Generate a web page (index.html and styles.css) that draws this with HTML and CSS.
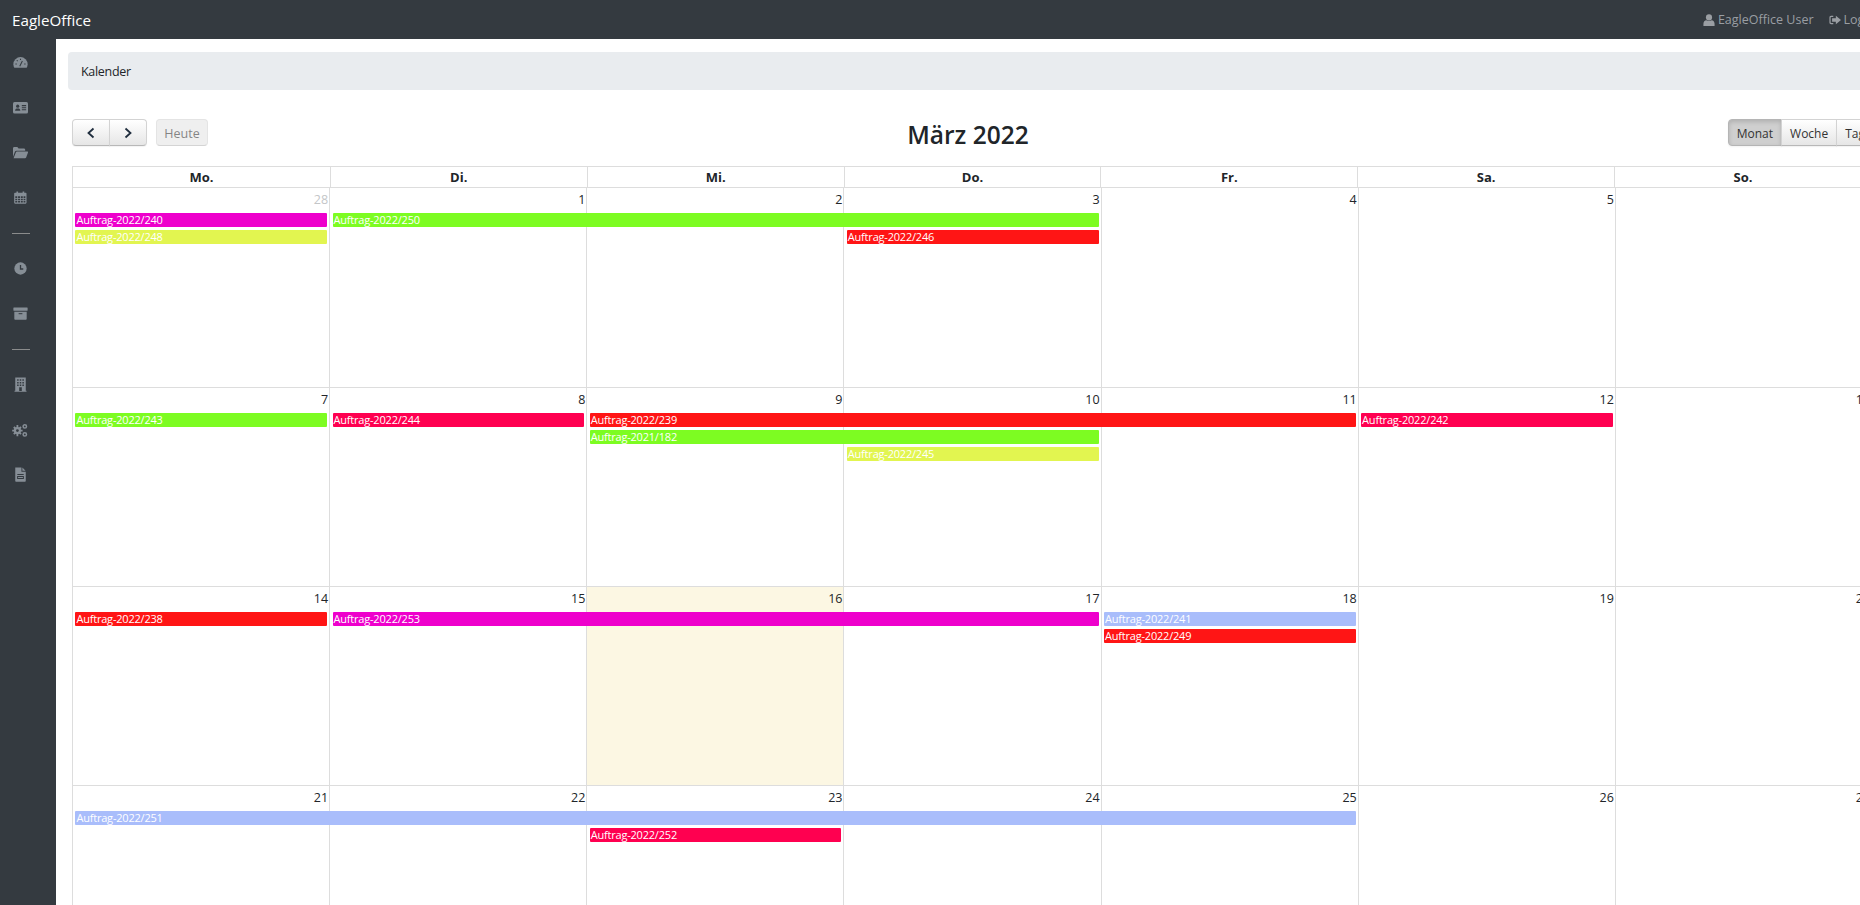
FILE: index.html
```html
<!DOCTYPE html>
<html lang="de">
<head>
<meta charset="utf-8">
<title>EagleOffice – Kalender</title>
<link rel="stylesheet" href="styles.css">
</head>
<body>
<header class="topbar">
  <a class="brand">EagleOffice</a>
  <nav class="usernav">
    <a class="usernav-link"><svg class="uicon" viewBox="0 0 14 14"><circle cx="7" cy="4" r="3.6"/><path d="M0.5 14V11.5C0.5 9 2 7.5 4 7.3C5.8 8.6 8.2 8.6 10 7.3C12 7.5 13.5 9 13.5 11.5V14Z"/></svg>EagleOffice User</a>
    <a class="usernav-link"><svg class="uicon" viewBox="0 0 14 12"><path d="M5 1H2.5C1.2 1 .5 2 .5 3V9C.5 10 1.2 11 2.5 11H5V9.6H2.6C2.1 9.6 1.9 9.3 1.9 9V3C1.9 2.7 2.1 2.4 2.6 2.4H5Z"/><path d="M8 1L14 6L8 11V8H3.6V4H8Z"/></svg>Logout</a>
  </nav>
</header>
<div class="shell">
  <aside class="sidebar">
    <a class="side-item"><svg class="sicon" viewBox="0 0 16 16"><path d="M8 2.2A7.6 7.6 0 0 0 .4 9.8C.4 11.2.8 12.5 1.4 13.6H14.6C15.2 12.5 15.6 11.2 15.6 9.8A7.6 7.6 0 0 0 8 2.2Z"/><path class="cut" d="M8 4v1.4M4 5.6l1 1M2.6 9.6h1.4M12 9.6h1.4M7.2 12L10 6.4" /></svg></a>
    <a class="side-item"><svg class="sicon" viewBox="0 0 16 16"><rect y="2" width="16" height="12.4" rx="1.6"/><circle class="hole" cx="5" cy="6.6" r="1.7"/><path class="hole" d="M2.2 11.4C2.2 9.6 3.2 9 5 9S7.8 9.6 7.8 11.4Z"/><path class="cut" d="M9.4 6h4.6M9.4 8.2h4.6M9.4 10.4h4.6"/></svg></a>
    <a class="side-item"><svg class="sicon" viewBox="0 0 16 16"><path d="M0 12.6V3.4C0 2.6.6 2 1.4 2H4.6L6 3.6H11.6C12.4 3.6 13 4.2 13 5V6H4C3 6 2.4 6.4 2 7.2Z"/><path d="M.6 14L3 7.9C3.2 7.3 3.6 7 4.2 7H15.2C15.9 7 16.2 7.5 16 8.1L14 13.2C13.8 13.7 13.4 14 12.8 14Z"/></svg></a>
    <a class="side-item"><svg class="sicon sicon-sm" viewBox="0 0 16 16"><path fill-rule="evenodd" d="M3 .6H5V2.2H10.6V.6H12.6V2.2H14.4C15 2.2 15.4 2.6 15.4 3.2V14.6C15.4 15.2 15 15.6 14.4 15.6H1.2C.6 15.6.2 15.2.2 14.6V3.2C.2 2.6.6 2.2 1.2 2.2H3ZM1.6 6.4V8.6H4V6.4ZM5 6.4V8.6H7.4V6.4ZM8.4 6.4V8.6H10.8V6.4ZM11.8 6.4V8.6H14V6.4ZM1.6 9.6V11.4H4V9.6ZM5 9.6V11.4H7.4V9.6ZM8.4 9.6V11.4H10.8V9.6ZM11.8 9.6V11.4H14V9.6ZM1.6 12.4V14.2H4V12.4ZM5 12.4V14.2H7.4V12.4ZM8.4 12.4V14.2H10.8V12.4ZM11.8 12.4V14.2H14V12.4Z"/></svg></a>
    <div class="side-rule-wrap"><hr class="side-rule"></div>
    <a class="side-item"><svg class="sicon sicon-sm" viewBox="0 0 16 16"><circle cx="8" cy="8" r="7.6"/><path class="cut wide-cut" d="M8 3.6V8.6H11.4"/></svg></a>
    <a class="side-item"><svg class="sicon" viewBox="0 0 16 16"><rect x=".4" y="1.6" width="15.2" height="3.4" rx=".4"/><path d="M1.4 6H14.6V13.8C14.6 14.2 14.2 14.6 13.8 14.6H2.2C1.8 14.6 1.4 14.2 1.4 13.8Z"/><path class="cut" d="M6 8.2H10"/></svg></a>
    <div class="side-rule-wrap"><hr class="side-rule"></div>
    <a class="side-item"><svg class="sicon" viewBox="0 0 16 16"><path fill-rule="evenodd" d="M2.4.4H13.6V14.6H14.4V15.6H1.6V14.6H2.4ZM4.4 2.4V4H6V2.4ZM7.2 2.4V4H8.8V2.4ZM10 2.4V4H11.6V2.4ZM4.4 5.2V6.8H6V5.2ZM7.2 5.2V6.8H8.8V5.2ZM10 5.2V6.8H11.6V5.2ZM4.4 8V9.6H6V8ZM7.2 8V9.6H8.8V8ZM10 8V9.6H11.6V8ZM6.6 11V15H9.4V11Z"/></svg></a>
    <a class="side-item"><svg class="sicon sicon-lg" viewBox="0 0 16 16"><circle cx="5.4" cy="8.6" r="3.6"/><path class="gear" d="M5.4 3v11.2M.2 8.6h10.4M1.8 5l7.2 7.2M9 5l-7.2 7.2"/><circle class="hole" cx="5.4" cy="8.6" r="1.4"/><circle class="ring" cx="12.8" cy="4.4" r="1.7"/><circle class="ring" cx="12.8" cy="12.4" r="1.7"/></svg></a>
    <a class="side-item"><svg class="sicon" viewBox="0 0 16 16"><path fill-rule="evenodd" d="M2.4.4H9V5H13.6V14.8C13.6 15.3 13.3 15.6 12.8 15.6H3.2C2.7 15.6 2.4 15.3 2.4 14.8ZM10 .6L13.4 4H10ZM4.6 7.4V8.4H11.4V7.4ZM4.4 9.6V12.8H11.6V9.6ZM5.4 10.6H10.6V11.8H5.4Z"/></svg></a>
  </aside>
  <main class="content">
    <div class="breadcrumb">Kalender</div>
    <section class="calendar">
      <div class="toolbar">
        <div class="tool-left">
          <div class="btn-group">
            <button class="btn btn-icon"><svg class="chev" viewBox="0 0 10 12"><path d="M7.5 1.5L2.5 6L7.5 10.5"/></svg></button>
            <button class="btn btn-icon"><svg class="chev" viewBox="0 0 10 12"><path d="M2.5 1.5L7.5 6L2.5 10.5"/></svg></button>
          </div>
          <button class="btn btn-disabled">Heute</button>
        </div>
        <h2 class="cal-title">März 2022</h2>
        <div class="btn-group tool-right">
          <button class="btn btn-active">Monat</button>
          <button class="btn">Woche</button>
          <button class="btn">Tag</button>
        </div>
      </div>
      <div class="grid">
        <div class="dow-row">
          <div class="dow">Mo.</div><div class="dow">Di.</div><div class="dow">Mi.</div><div class="dow">Do.</div><div class="dow">Fr.</div><div class="dow">Sa.</div><div class="dow">So.</div>
        </div>

        <div class="week week-first">
          <div class="day c1 other">28</div><div class="day c2">1</div><div class="day c3">2</div><div class="day c4">3</div><div class="day c5">4</div><div class="day c6">5</div><div class="day c7">6</div>
          <div class="ev magenta c1 r1">Auftrag-2022/240</div>
          <div class="ev green c2 r1 s3">Auftrag-2022/250</div>
          <div class="ev yellow c1 r2">Auftrag-2022/248</div>
          <div class="ev red c4 r2">Auftrag-2022/246</div>
        </div>

        <div class="week">
          <div class="day c1">7</div><div class="day c2">8</div><div class="day c3">9</div><div class="day c4">10</div><div class="day c5">11</div><div class="day c6">12</div><div class="day c7">13</div>
          <div class="ev green c1 r1">Auftrag-2022/243</div>
          <div class="ev pink c2 r1">Auftrag-2022/244</div>
          <div class="ev red c3 r1 s3">Auftrag-2022/239</div>
          <div class="ev pink c6 r1">Auftrag-2022/242</div>
          <div class="ev green c3 r2 s2">Auftrag-2021/182</div>
          <div class="ev yellow c4 r3">Auftrag-2022/245</div>
        </div>

        <div class="week">
          <div class="day c1">14</div><div class="day c2">15</div><div class="day c3 today">16</div><div class="day c4">17</div><div class="day c5">18</div><div class="day c6">19</div><div class="day c7">20</div>
          <div class="ev red c1 r1">Auftrag-2022/238</div>
          <div class="ev magenta c2 r1 s3">Auftrag-2022/253</div>
          <div class="ev blue c5 r1">Auftrag-2022/241</div>
          <div class="ev red c5 r2">Auftrag-2022/249</div>
        </div>

        <div class="week">
          <div class="day c1">21</div><div class="day c2">22</div><div class="day c3">23</div><div class="day c4">24</div><div class="day c5">25</div><div class="day c6">26</div><div class="day c7">27</div>
          <div class="ev blue c1 r1 s5">Auftrag-2022/251</div>
          <div class="ev pink c3 r2">Auftrag-2022/252</div>
        </div>
      </div>
    </section>
  </main>
</div>
</body>
</html>
```
FILE: styles.css
```css
* { box-sizing: border-box; }
html, body { margin: 0; height: 100%; overflow: hidden; }
body {
  font-family: "Open Sans", "Noto Sans", sans-serif;
  font-size: 14px;
  color: #212529;
  background: #fff;
}

/* top bar */
.topbar {
  height: 39px;
  background: #343a40;
  display: flex;
  align-items: center;
  justify-content: space-between;
  padding-left: 12px;
  overflow: hidden;
  white-space: nowrap;
}
.brand { color: #fff; font-size: 15.2px; }
.usernav { display: flex; gap: 15px; margin-right: -24px; align-items: center; }
.usernav-link { color: #9a9ea3; font-size: 12.5px; display: flex; align-items: center; gap: 3px; }
.uicon { width: 12px; height: 12px; fill: #9a9ea3; }

/* shell */
.shell { display: flex; height: 866px; }
.sidebar {
  flex: 0 0 56px;
  background: #343a40;
  display: flex;
  flex-direction: column;
  padding-top: 1px;
}
.side-item { width: 40px; height: 45px; display: flex; align-items: center; justify-content: center; }
.sicon { width: 15px; height: 15px; fill: #868e96; }
.sicon-sm { width: 13px; height: 13px; }
.sicon-lg { width: 16px; height: 16px; }
.sicon .cut { fill: none; stroke: #343a40; stroke-width: 1.1; }
.sicon .wide-cut { stroke-width: 1.6; }
.sicon .hole { fill: #343a40; }
.sicon .gear { fill: none; stroke: #868e96; stroke-width: 1.8; }
.sicon .ring { fill: none; stroke: #868e96; stroke-width: 1.5; }
.side-rule-wrap { height: 26px; display: flex; align-items: center; padding: 0 26px 0 12px; }
.side-rule { flex: 1; margin: 0; border: 0; border-top: 1px solid #8a8b8c; }

/* content */
.content { flex: 0 0 1860px; padding: 13px 12px; }
.breadcrumb {
  height: 38px;
  background: #e9ecef;
  border-radius: 4px;
  padding: 0 13px;
  display: flex;
  align-items: center;
  font-size: 12.5px;
  letter-spacing: -.3px;
}

.calendar { width: 1800px; margin: 29px 0 0 4px; }
.toolbar {
  display: grid;
  grid-template-columns: 1fr auto 1fr;
  grid-template-rows: 27px;
  align-items: center;
  margin-bottom: 20px;
}
.tool-left { display: flex; gap: 9px; }
.tool-right { justify-self: end; margin-right: -2px; }
.cal-title { align-self: start; margin: 2px 0 0 -8px; font-size: 24.5px; font-weight: 600; line-height: 27px; }
.btn-group { display: flex; }
.btn {
  height: 27px;
  padding: 1px 8px 0;
  font: inherit;
  font-size: 12px;
  color: #333;
  background: linear-gradient(#fff, #e6e6e6);
  border: 1px solid #d3d3d3;
  border-bottom-color: #b8b8b8;
  border-radius: 0;
  box-shadow: inset 0 1px 0 rgba(255,255,255,.2), 0 1px 1px rgba(0,0,0,.05);
  margin-left: -1px;
}
.btn-group .btn:first-child { border-radius: 4px 0 0 4px; margin-left: 0; }
.btn-group .btn:last-child { border-radius: 0 4px 4px 0; }
.btn-icon { width: 38px; padding: 0; display: flex; align-items: center; justify-content: center; }
.btn-group .btn-icon:first-child { width: 38px; }
.chev { width: 10px; height: 12px; fill: none; stroke: #1f2d3d; stroke-width: 1.8; }
.btn-disabled {
  margin-left: 0;
  width: 52px;
  padding: 1px 0 0;
  border-radius: 4px;
  font-size: 12.5px;
  color: #333;
  opacity: .6;
  background: #e6e6e6;
  box-shadow: none;
}
.btn-active {
  background: #cfcfcf;
  border-color: #b5b5b5;
  box-shadow: inset 0 2px 4px rgba(0,0,0,.15), 0 1px 2px rgba(0,0,0,.05);
}

/* month grid */
.dow-row {
  display: grid;
  grid-template-columns: repeat(7, 1fr);
  height: 21px;
  border: 1px solid #ddd;
  border-bottom: 0;
}
.dow {
  text-align: center;
  font-size: 13px;
  font-weight: 700;
  line-height: 20px;
  border-left: 1px solid #ddd;
}
.dow:first-child { border-left: 0; }
.week {
  display: grid;
  grid-template-columns: repeat(7, 1fr);
  grid-template-rows: 25px 17px 17px 17px 1fr;
  height: 199px;
  border-top: 1px solid #ddd;
}
.week-first { height: 200px; }
.day {
  grid-row: 1 / -1;
  text-align: right;
  padding: 3px 1px 0 0;
  font-size: 12.5px;
  line-height: 18px;
  border-left: 1px solid #ddd;
}
.day.c7 { border-right: 1px solid #ddd; }
.day.other { color: #c4c6c8; }
.day.today { background: #fcf7e3; }
.c1 { grid-column: 1; }
.c2 { grid-column: 2; }
.c3 { grid-column: 3; }
.c4 { grid-column: 4; }
.c5 { grid-column: 5; }
.c6 { grid-column: 6; }
.c7 { grid-column: 7; }
.r1 { grid-row: 2; }
.r2 { grid-row: 3; }
.r3 { grid-row: 4; }
.s2 { grid-column-end: span 2; }
.s3 { grid-column-end: span 3; }
.s5 { grid-column-end: span 5; }
.ev {
  height: 14px;
  margin: 0 2px 3px 3.4px;
  padding-left: 1px;
  border-radius: 1px;
  color: #fff;
  font-size: 11px;
  letter-spacing: -.2px;
  line-height: 14px;
  white-space: nowrap;
  overflow: hidden;
}
.magenta { background: #ee00cc; }
.yellow { background: #e2f550; }
.green { background: #7dfc22; }
.red { background: #ff1515; }
.pink { background: #ff0050; }
.blue { background: #a9bdfb; }
```
